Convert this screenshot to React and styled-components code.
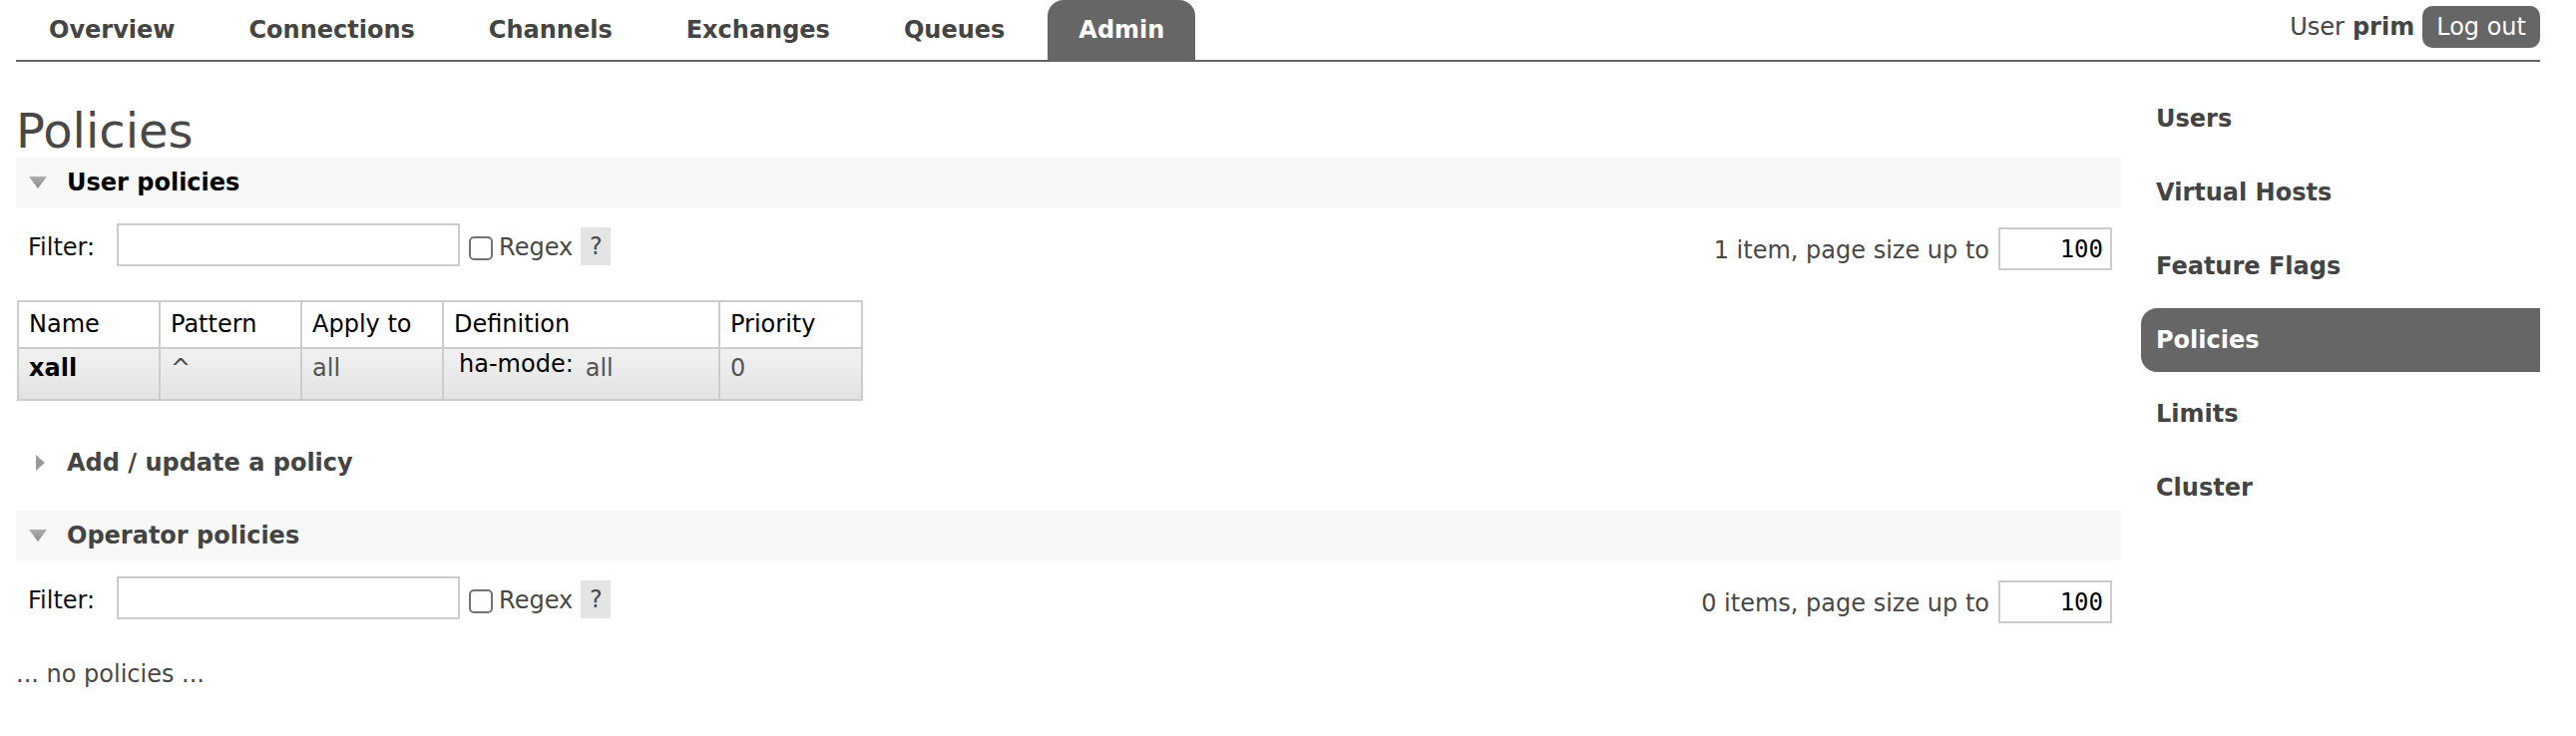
import styled, { createGlobalStyle } from 'styled-components';

const GlobalStyle = createGlobalStyle`
  * { box-sizing: border-box; }
  body {
    margin: 0;
    background: #fff;
    color: #484848;
    font-family: 'DejaVu Sans', Verdana, sans-serif;
    font-size: 24px;
  }
`;

const Outer = styled.div`
  padding: 0 36px 0 16px;
`;

const Header = styled.div`
  display: flex;
  justify-content: space-between;
  align-items: flex-start;
  border-bottom: 2px solid #666;
`;

const Menu = styled.ul`
  display: flex;
  margin: 0;
  padding: 0 0 0 2px;
  list-style: none;
`;

const Tab = styled.li`
  padding: 16px 31px;
  margin-right: 12px;
  line-height: 28px;
  font-weight: bold;
  color: ${(p) => (p.$selected ? '#fff' : '#444')};
  background: ${(p) => (p.$selected ? '#666' : 'transparent')};
  border-radius: 16px 16px 0 0;
`;

const Login = styled.div`
  display: flex;
  align-items: center;
  margin-top: 6px;
  line-height: 28px;
  color: #444;
  b { margin-left: 8px; }
`;

const LogoutButton = styled.button`
  margin-left: 8px;
  padding: 7px 14px;
  border: 0;
  border-radius: 10px;
  background: #666;
  color: #fff;
  font: inherit;
  line-height: 28px;
`;

const Body = styled.div`
  display: flex;
  align-items: flex-start;
`;

const Main = styled.div`
  flex: 1;
  min-width: 0;
  padding-top: 42px;
`;

const Title = styled.h1`
  margin: 0;
  font-size: 48px;
  font-weight: normal;
  line-height: 54px;
  color: #484848;
`;

const SectionHeader = styled.h2`
  display: flex;
  align-items: center;
  margin: ${(p) => p.$mt || 0}px 0 0;
  padding: 11px 12px;
  font-size: 24px;
  line-height: 28px;
  font-weight: bold;
  color: ${(p) => p.$color};
  background: ${(p) => (p.$open ? '#f8f8f8' : 'transparent')};
`;

const Arrow = styled.svg`
  flex: none;
  margin: ${(p) => (p.$open ? '0 20px 0 1px' : '0 22px 0 8px')};
`;

const FilterBar = styled.div`
  display: flex;
  justify-content: space-between;
  align-items: flex-start;
  margin-top: 16px;
`;

const Group = styled.div`
  display: flex;
  align-items: flex-start;
  margin-top: ${(p) => p.$mt || 0}px;
`;

const Label = styled.span`
  padding: 10px 0 0 ${(p) => p.$pl ?? 12}px;
  line-height: 28px;
  color: ${(p) => p.$color || '#484848'};
`;

const TextInput = styled.input`
  width: 344px;
  height: 43px;
  margin-left: 22px;
  border: 2px solid #ccc;
  font: inherit;
`;

const Check = styled.input`
  appearance: none;
  width: 24px;
  height: 24px;
  margin: 13px 0 0 9px;
  border: 2px solid #737373;
  border-radius: 5px;
  background: #fff;
`;

const Help = styled.span`
  width: 30px;
  height: 38px;
  margin: 4px 0 0 8px;
  line-height: 38px;
  text-align: center;
  background: #e4e4e4;
  color: #484848;
`;

const PageText = styled.span`
  padding-top: 9px;
  margin-right: 9px;
  line-height: 28px;
`;

const PageInput = styled.input`
  width: 114px;
  height: 43px;
  margin-right: 9px;
  padding: 0 7px;
  border: 2px solid #ccc;
  font-family: 'DejaVu Sans Mono', monospace;
  font-size: 24px;
  text-align: right;
  color: #000;
`;

const Table = styled.table`
  margin: 30px 0 0 1px;
  width: 846px;
  border-collapse: collapse;
  table-layout: fixed;
  border: 2px solid #ccc;
`;

const Th = styled.th`
  padding: 8px 10px 9px;
  border: 2px solid #ccc;
  text-align: left;
  font-weight: normal;
  line-height: 28px;
  color: #000;
`;

const Td = styled.td`
  padding: 5px 10px 17px;
  border: 2px solid #ccc;
  vertical-align: top;
  line-height: 28px;
  color: ${(p) => p.$color || '#555'};
  font-weight: ${(p) => (p.$bold ? 'bold' : 'normal')};
  background: linear-gradient(#f1f1f1, #e3e3e3);
`;

const DefPair = styled.div`
  display: flex;
  align-items: flex-start;
`;

const DefKey = styled.span`
  margin-left: 5px;
  margin-right: 12px;
  line-height: 20px;
  color: #000;
`;

const Empty = styled.p`
  margin: 37px 0 0;
  line-height: 28px;
  color: #484848;
`;

const Sidebar = styled.ul`
  width: 400px;
  margin: 0 0 0 20px;
  padding: 25px 0 0;
  list-style: none;
`;

const SideItem = styled.li`
  margin-bottom: 10px;
  padding: 18px 15px;
  line-height: 28px;
  font-weight: bold;
  color: ${(p) => (p.$selected ? '#fff' : '#444')};
  background: ${(p) => (p.$selected ? '#666' : 'transparent')};
  border-radius: 16px 0 0 16px;
`;

const tabs = ['Overview', 'Connections', 'Channels', 'Exchanges', 'Queues', 'Admin'];
const sideLinks = ['Users', 'Virtual Hosts', 'Feature Flags', 'Policies', 'Limits', 'Cluster'];

function Toggle({ open }) {
  return open ? (
    <Arrow $open width="18" height="12" viewBox="0 0 18 12">
      <defs>
        <linearGradient id="down" x1="0" y1="0" x2="0" y2="1">
          <stop offset="0" stopColor="#b0b0b0" />
          <stop offset="1" stopColor="#8a8a8a" />
        </linearGradient>
      </defs>
      <polygon points="0,0 18,0 9,12" fill="url(#down)" />
    </Arrow>
  ) : (
    <Arrow width="9" height="16" viewBox="0 0 9 16">
      <polygon points="0,0 9,8 0,16" fill="#9a9a9a" />
    </Arrow>
  );
}

function Filter({ count }) {
  return (
    <FilterBar>
      <Group>
        <Label $color="#111">Filter:</Label>
        <TextInput type="text" />
        <Check type="checkbox" />
        <Label $pl={6}>Regex</Label>
        <Help>?</Help>
      </Group>
      <Group $mt={4}>
        <PageText>{count}, page size up to</PageText>
        <PageInput type="text" defaultValue="100" />
      </Group>
    </FilterBar>
  );
}

export default function App() {
  return (
    <>
      <GlobalStyle />
      <Outer>
        <Header>
          <Menu>
            {tabs.map((t) => (
              <Tab key={t} $selected={t === 'Admin'}>{t}</Tab>
            ))}
          </Menu>
          <Login>
            User <b>prim</b>
            <LogoutButton>Log out</LogoutButton>
          </Login>
        </Header>
        <Body>
          <Main>
            <Title>Policies</Title>
            <SectionHeader $open $color="#000">
              <Toggle open />
              User policies
            </SectionHeader>
            <Filter count="1 item" />
            <Table>
              <colgroup>
                <col style={{ width: 142 }} />
                <col style={{ width: 142 }} />
                <col style={{ width: 142 }} />
                <col style={{ width: 277 }} />
                <col style={{ width: 143 }} />
              </colgroup>
              <thead>
                <tr>
                  <Th>Name</Th>
                  <Th>Pattern</Th>
                  <Th>Apply to</Th>
                  <Th>Definition</Th>
                  <Th>Priority</Th>
                </tr>
              </thead>
              <tbody>
                <tr>
                  <Td $bold $color="#000">xall</Td>
                  <Td $color="#484848">^</Td>
                  <Td>all</Td>
                  <Td>
                    <DefPair>
                      <DefKey>ha-mode:</DefKey>
                      all
                    </DefPair>
                  </Td>
                  <Td>0</Td>
                </tr>
              </tbody>
            </Table>
            <SectionHeader $mt={37} $color="#444">
              <Toggle />
              Add / update a policy
            </SectionHeader>
            <SectionHeader $mt={23} $open $color="#444">
              <Toggle open />
              Operator policies
            </SectionHeader>
            <Filter count="0 items" />
            <Empty>... no policies ...</Empty>
          </Main>
          <Sidebar>
            {sideLinks.map((l) => (
              <SideItem key={l} $selected={l === 'Policies'}>{l}</SideItem>
            ))}
          </Sidebar>
        </Body>
      </Outer>
    </>
  );
}
